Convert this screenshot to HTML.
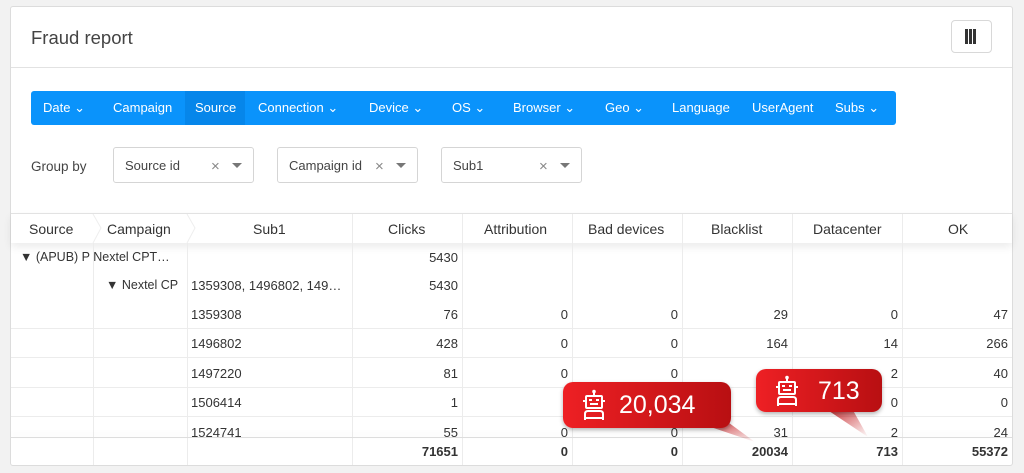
<!DOCTYPE html>
<html><head><style>
*{margin:0;padding:0;box-sizing:border-box}
body{width:1024px;height:473px;background:#f2f2f2;font-family:"Liberation Sans",sans-serif;color:#333;position:relative;overflow:hidden}
.a{position:absolute}
.card{left:10px;top:6px;width:1003px;height:460px;background:#fff;border:1px solid #dcdcdc;border-radius:3px}
.t{font-size:13px;white-space:nowrap}
.h{font-size:14px;top:221px}
.r{text-align:right}
.sel{height:36px;top:147px;border:1px solid #d5d5d5;border-radius:3px;background:#fff}
.sel span{position:absolute;left:11px;top:10px;font-size:13px;color:#444}
.sel i{position:absolute;top:10px;font-style:normal;color:#888;font-size:15px}
.sel b{position:absolute;top:15px;width:0;height:0;border-left:5px solid transparent;border-right:5px solid transparent;border-top:5px solid #777}
.nav{left:31px;top:91px;width:865px;height:34px;background:#0a93fb;border-radius:3px}
.nav div{position:absolute;top:9px;color:#fff;font-size:13px;white-space:nowrap}
.vl{position:absolute;width:1px;background:#ececec}
.hl{position:absolute;height:1px;background:#ececec;left:11px;width:1001px}
.bub{background:linear-gradient(90deg,#ee2024,#b80f12);border-radius:10px;color:#fff;font-size:25px;box-shadow:0 2px 4px rgba(0,0,0,.3)}
</style></head><body>
<div class="a card"></div>
<div class="a t" style="left:31px;top:27px;font-size:18.5px;color:#444">Fraud report</div>
<div class="a" style="left:951px;top:20px;width:41px;height:33px;border:1px solid #d8d8d8;border-radius:4px;background:#fff"></div>
<div class="a" style="left:965px;top:29px;width:3px;height:15px;background:#333"></div>
<div class="a" style="left:969px;top:29px;width:3px;height:15px;background:#333"></div>
<div class="a" style="left:973px;top:29px;width:3px;height:15px;background:#333"></div>
<div class="a" style="left:11px;top:67px;width:1001px;height:1px;background:#e2e2e2"></div>

<div class="a nav">
<div style="left:154px;top:0;width:60px;height:34px;background:#0686ea"></div>
<div style="left:12px">Date &#8964;</div>
<div style="left:82px">Campaign</div>
<div style="left:164px">Source</div>
<div style="left:227px">Connection &#8964;</div>
<div style="left:338px">Device &#8964;</div>
<div style="left:421px">OS &#8964;</div>
<div style="left:482px">Browser &#8964;</div>
<div style="left:574px">Geo &#8964;</div>
<div style="left:641px">Language</div>
<div style="left:721px">UserAgent</div>
<div style="left:804px">Subs &#8964;</div>
</div>

<div class="a t" style="left:31px;top:159px;color:#444;font-size:13.5px">Group by</div>
<div class="a sel" style="left:113px;width:141px"><span>Source id</span><i style="left:97px">×</i><b style="left:118px"></b></div>
<div class="a sel" style="left:277px;width:141px"><span>Campaign id</span><i style="left:97px">×</i><b style="left:118px"></b></div>
<div class="a sel" style="left:441px;width:141px"><span>Sub1</span><i style="left:97px">×</i><b style="left:118px"></b></div>

<div class="a" style="left:11px;top:213px;width:1001px;height:30px;border-top:1px solid #e2e2e2;box-shadow:0 4px 8px rgba(0,0,0,.08);background:#fff"></div>
<div class="a t h" style="left:29px">Source</div>
<div class="a t h" style="left:107px">Campaign</div>
<div class="a t h" style="left:253px">Sub1</div>
<div class="a t h" style="left:388px">Clicks</div>
<div class="a t h" style="left:484px">Attribution</div>
<div class="a t h" style="left:588px">Bad devices</div>
<div class="a t h" style="left:711px">Blacklist</div>
<div class="a t h" style="left:813px">Datacenter</div>
<div class="a t h" style="left:948px">OK</div>
<svg class="a" style="left:0;top:214px" width="200" height="29"><path d="M93 0 L101 14 L93 29 M187 0 L195 14 L187 29" fill="none" stroke="#eee"/></svg>

<div class="vl" style="left:93px;top:243px;height:222px"></div>
<div class="vl" style="left:187px;top:243px;height:222px"></div>
<div class="vl" style="left:352px;top:214px;height:251px"></div>
<div class="vl" style="left:462px;top:214px;height:251px"></div>
<div class="vl" style="left:572px;top:214px;height:251px"></div>
<div class="vl" style="left:682px;top:214px;height:251px"></div>
<div class="vl" style="left:792px;top:214px;height:251px"></div>
<div class="vl" style="left:902px;top:214px;height:251px"></div>
<div class="hl" style="top:328px"></div>
<div class="hl" style="top:357px"></div>
<div class="hl" style="top:387px"></div>
<div class="hl" style="top:416px"></div>
<div class="a" style="left:11px;top:437px;width:1001px;height:1px;background:#ddd;box-shadow:0 -3px 6px rgba(0,0,0,.08)"></div>

<div class="a t" style="left:20px;top:250px;font-size:12.5px">▼ (APUB) P Nextel CPT…</div>
<div class="a t" style="left:106px;top:278px;font-size:12.5px">▼ Nextel CP</div>
<div class="a t" style="left:191px;top:278px">1359308, 1496802, 149…</div>
<div class="a t r" style="left:362px;width:96px;top:250px">5430</div>
<div class="a t r" style="left:362px;width:96px;top:278px">5430</div>

<div class="a t" style="left:191px;top:307px">1359308</div>
<div class="a t" style="left:191px;top:336px">1496802</div>
<div class="a t" style="left:191px;top:366px">1497220</div>
<div class="a t" style="left:191px;top:395px">1506414</div>
<div class="a t" style="left:191px;top:425px">1524741</div>

<div class="a t r" style="left:352px;width:106px;top:307px">76</div>
<div class="a t r" style="left:352px;width:106px;top:336px">428</div>
<div class="a t r" style="left:352px;width:106px;top:366px">81</div>
<div class="a t r" style="left:352px;width:106px;top:395px">1</div>
<div class="a t r" style="left:352px;width:106px;top:425px">55</div>

<div class="a t r" style="left:462px;width:106px;top:307px">0</div>
<div class="a t r" style="left:462px;width:106px;top:336px">0</div>
<div class="a t r" style="left:462px;width:106px;top:366px">0</div>
<div class="a t r" style="left:462px;width:106px;top:425px">0</div>
<div class="a t r" style="left:572px;width:106px;top:307px">0</div>
<div class="a t r" style="left:572px;width:106px;top:336px">0</div>
<div class="a t r" style="left:572px;width:106px;top:366px">0</div>
<div class="a t r" style="left:572px;width:106px;top:425px">0</div>
<div class="a t r" style="left:682px;width:106px;top:307px">29</div>
<div class="a t r" style="left:682px;width:106px;top:336px">164</div>
<div class="a t r" style="left:682px;width:106px;top:425px">31</div>
<div class="a t r" style="left:792px;width:106px;top:307px">0</div>
<div class="a t r" style="left:792px;width:106px;top:336px">14</div>
<div class="a t r" style="left:792px;width:106px;top:366px">2</div>
<div class="a t r" style="left:792px;width:106px;top:395px">0</div>
<div class="a t r" style="left:792px;width:106px;top:425px">2</div>
<div class="a t r" style="left:902px;width:106px;top:307px">47</div>
<div class="a t r" style="left:902px;width:106px;top:336px">266</div>
<div class="a t r" style="left:902px;width:106px;top:366px">40</div>
<div class="a t r" style="left:902px;width:106px;top:395px">0</div>
<div class="a t r" style="left:902px;width:106px;top:425px">24</div>

<div class="a t r" style="left:352px;width:106px;top:444px;font-weight:bold">71651</div>
<div class="a t r" style="left:462px;width:106px;top:444px;font-weight:bold">0</div>
<div class="a t r" style="left:572px;width:106px;top:444px;font-weight:bold">0</div>
<div class="a t r" style="left:682px;width:106px;top:444px;font-weight:bold">20034</div>
<div class="a t r" style="left:792px;width:106px;top:444px;font-weight:bold">713</div>
<div class="a t r" style="left:902px;width:106px;top:444px;font-weight:bold">55372</div>

<svg class="a" style="left:0;top:0" width="1024" height="473">
<defs><linearGradient id="g" x1="0" y1="0" x2="1" y2="1"><stop offset="0" stop-color="#c01014"/><stop offset="1" stop-color="#c01014" stop-opacity="0"/></linearGradient></defs>
<polygon points="690,420 725,420 755,442" fill="url(#g)"/>
<polygon points="820,405 850,405 868,437" fill="url(#g)"/>
</svg>

<div class="a bub" style="left:563px;top:382px;width:168px;height:46px"><span class="a" style="left:56px;top:9px">20,034</span>
<svg class="a" style="left:20px;top:7px" width="22" height="32" viewBox="0 0 22 32" fill="none" stroke="#fff" stroke-width="2"><circle cx="11" cy="2.5" r="1.8" fill="#fff" stroke="none"/><line x1="11" y1="4" x2="11" y2="7"/><rect x="3" y="7" width="16" height="12" rx="1"/><rect x="6" y="10" width="3" height="2" fill="#fff" stroke="none"/><rect x="13" y="10" width="3" height="2" fill="#fff" stroke="none"/><line x1="7" y1="15" x2="15" y2="15"/><line x1="0" y1="12" x2="3" y2="12"/><line x1="19" y1="12" x2="22" y2="12"/><path d="M2 31 V25 Q2 22 5 22 H17 Q20 22 20 25 V31 M2 29 H20"/></svg></div>
<div class="a bub" style="left:756px;top:369px;width:126px;height:43px"><span class="a" style="left:62px;top:8px">713</span>
<svg class="a" style="left:20px;top:6px" width="22" height="32" viewBox="0 0 22 32" fill="none" stroke="#fff" stroke-width="2"><circle cx="11" cy="2.5" r="1.8" fill="#fff" stroke="none"/><line x1="11" y1="4" x2="11" y2="7"/><rect x="3" y="7" width="16" height="12" rx="1"/><rect x="6" y="10" width="3" height="2" fill="#fff" stroke="none"/><rect x="13" y="10" width="3" height="2" fill="#fff" stroke="none"/><line x1="7" y1="15" x2="15" y2="15"/><line x1="0" y1="12" x2="3" y2="12"/><line x1="19" y1="12" x2="22" y2="12"/><path d="M2 31 V25 Q2 22 5 22 H17 Q20 22 20 25 V31 M2 29 H20"/></svg></div>
</body></html>
